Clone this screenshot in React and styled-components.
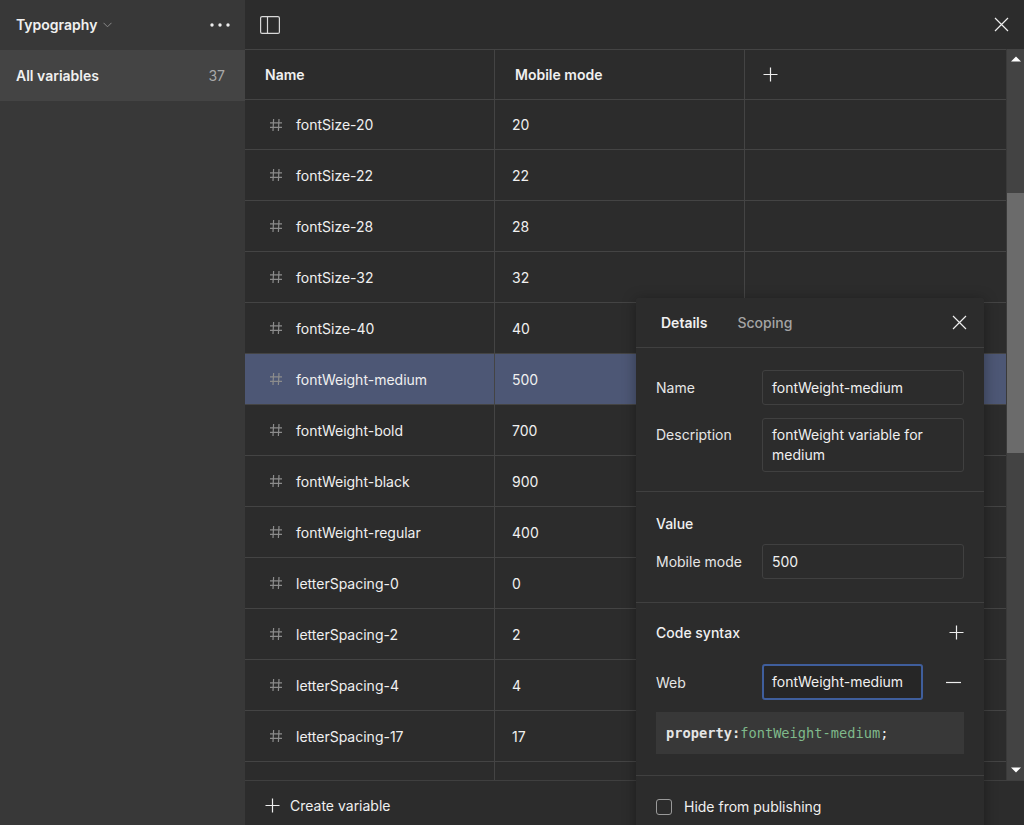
import React from "react";
import styled, { createGlobalStyle } from "styled-components";

const rows = [
  { name: "fontSize-20", value: "20" },
  { name: "fontSize-22", value: "22" },
  { name: "fontSize-28", value: "28" },
  { name: "fontSize-32", value: "32" },
  { name: "fontSize-40", value: "40" },
  { name: "fontWeight-medium", value: "500", selected: true },
  { name: "fontWeight-bold", value: "700" },
  { name: "fontWeight-black", value: "900" },
  { name: "fontWeight-regular", value: "400" },
  { name: "letterSpacing-0", value: "0" },
  { name: "letterSpacing-2", value: "2" },
  { name: "letterSpacing-4", value: "4" },
  { name: "letterSpacing-17", value: "17" },
  { name: "", value: "" },
];

const GlobalStyle = createGlobalStyle`
  html, body {
    margin: 0;
    height: 100%;
    overflow: hidden;
    background: #2c2c2c;
  }
  * {
    box-sizing: border-box;
  }
`;

const Page = styled.div`
  position: relative;
  display: flex;
  width: 1024px;
  height: 825px;
  overflow: hidden;
  background: #2c2c2c;
  color: #f0f0f0;
  font-family: Inter, "Liberation Sans", sans-serif;
  font-size: 14px;
`;

const Sidebar = styled.aside`
  flex: 0 0 245px;
  display: flex;
  flex-direction: column;
  background: #383838;
`;

const SidebarHead = styled.div`
  display: flex;
  align-items: center;
  height: 50px;
  padding: 0 15px 1px 16px;
`;

const FileTitle = styled.span`
  font-weight: 600;
  margin-right: 6px;
`;

const Dots = styled.svg`
  margin-left: auto;
  display: block;
`;

const SidebarItem = styled.div`
  display: flex;
  align-items: center;
  justify-content: space-between;
  height: 51px;
  padding: 0 20px 0 16px;
  background: #444444;
  font-weight: 600;
`;

const Count = styled.span`
  color: #a8a8a8;
  font-weight: 400;
`;

const Main = styled.main`
  flex: 1;
  display: flex;
  flex-direction: column;
  min-width: 0;
`;

const TopBar = styled.div`
  flex: 0 0 49px;
  display: flex;
  align-items: center;
  justify-content: space-between;
  padding: 0 15px;
`;

const Body = styled.div`
  flex: 0 0 731px;
  display: flex;
  min-height: 0;
`;

const Table = styled.div`
  flex: 1;
  overflow: hidden;
  border-top: 1px solid #444444;
`;

const Row = styled.div`
  display: grid;
  grid-template-columns: 250px 250px 1fr;
  height: ${(p) => p.$height || 51}px;
  background: ${(p) => (p.$selected ? "#4d5775" : "transparent")};
  border-bottom: 1px solid #444444;
`;

const Cell = styled.div`
  display: flex;
  align-items: center;
  min-width: 0;
  padding-left: ${(p) => p.$pad || 0}px;
  border-right: ${(p) => (p.$last ? "none" : "1px solid #444444")};
  font-weight: ${(p) => (p.$head ? 600 : 400)};
`;

const HashIcon = styled.svg`
  display: block;
  margin-right: 13px;
`;

const Scrollbar = styled.div`
  flex: 0 0 18px;
  display: flex;
  flex-direction: column;
  align-items: center;
  background: #434343;
  border-left: 1px solid #3a3a3a;
`;

const Arrow = styled.svg`
  display: block;
  flex: 0 0 auto;
  margin-top: ${(p) => p.$top};
  margin-bottom: ${(p) => p.$bottom || "0"};
`;

const Thumb = styled.div`
  flex: 0 0 260px;
  align-self: stretch;
  margin-top: 131px;
  background: #6b6b6b;
`;

const Footer = styled.div`
  flex: 1;
  display: flex;
  align-items: center;
  gap: 10px;
  padding: 4px 0 0 20px;
  border-top: 1px solid #3f3f3f;
`;

const Popover = styled.section`
  position: absolute;
  left: 636px;
  top: 298px;
  width: 348px;
  height: 540px;
  background: #2c2c2c;
  box-shadow: 0 2px 14px rgba(0, 0, 0, 0.35);
  border-radius: 2px;
`;

const PopHead = styled.div`
  display: flex;
  align-items: center;
  height: 50px;
  padding: 0 17px 0 25px;
  border-bottom: 1px solid #404040;
`;

const Tab = styled.span`
  font-weight: ${(p) => (p.$active ? 600 : 500)};
  color: ${(p) => (p.$active ? "#f0f0f0" : "#a4a4a4")};
  margin-right: 30px;
`;

const Section = styled.div`
  display: flex;
  flex-direction: column;
  height: ${(p) => p.$height}px;
  padding: ${(p) => p.$pad};
  gap: ${(p) => p.$gap || 0}px;
  border-bottom: ${(p) => (p.$open ? "none" : "1px solid #404040")};
`;

const SectionTitle = styled.div`
  display: flex;
  align-items: center;
  justify-content: space-between;
  height: ${(p) => p.$height || 20}px;
  font-weight: 500;
`;

const Field = styled.div`
  display: flex;
  align-items: ${(p) => (p.$top ? "flex-start" : "center")};
`;

const Label = styled.div`
  flex: 0 0 106px;
  color: #e6e6e6;
  padding-top: ${(p) => (p.$top ? 8 : 0)}px;
`;

const Input = styled.div`
  width: ${(p) => p.$width || 202}px;
  min-height: ${(p) => p.$height || 35}px;
  display: flex;
  align-items: center;
  padding: ${(p) => (p.$focus ? "0 8px" : "0 9px")};
  border: ${(p) => (p.$focus ? "2px solid #3f5e9c" : "1px solid #404040")};
  border-radius: 3px;
  background: ${(p) => (p.$focus ? "#262626" : "transparent")};
  line-height: 20px;
`;

const IconEnd = styled.svg`
  display: block;
  margin-left: auto;
  margin-right: 3px;
`;

const CodeBox = styled.div`
  display: flex;
  align-items: center;
  height: 42px;
  margin-top: 12px;
  padding-left: 10px;
  background: #383838;
  font-family: "DejaVu Sans Mono", "Liberation Mono", monospace;
  font-size: 13.7px;
  white-space: pre;
`;

const CodeKey = styled.span`
  font-weight: 700;
  color: #e4e4e4;
`;

const CodeValue = styled.span`
  color: #7fb98a;
`;

const CheckRow = styled.div`
  display: flex;
  align-items: center;
  gap: 12px;
  height: 61px;
  padding-left: 20px;
`;

const Checkbox = styled.span`
  width: 16px;
  height: 16px;
  border: 1.5px solid #9a9a9a;
  border-radius: 3px;
`;

const Plus = ({ size = 15, className }) => (
  <svg className={className} width={size} height={size} viewBox="0 0 15 15" fill="none" stroke="#eeeeee" strokeWidth="1.2">
    <path d="M7.5 0.5v14M0.5 7.5h14" />
  </svg>
);

const Cross = () => (
  <svg width="15" height="15" viewBox="0 0 15 15" fill="none" stroke="#eeeeee" strokeWidth="1.2" style={{ display: "block" }}>
    <path d="M1 1l13 13M14 1L1 14" />
  </svg>
);

const Hash = () => (
  <HashIcon width="14" height="14" viewBox="0 0 14 14" fill="none" stroke="#8c8c8c" strokeWidth="1.2">
    <path d="M4.6 1L4 13M10 1L9.4 13M1 4.8h12M1 9.4h12" />
  </HashIcon>
);

const VariableRow = ({ name, value, selected, height }) => (
  <Row $selected={selected} $height={height}>
    <Cell $pad={24}>
      {name && <Hash />}
      {name}
    </Cell>
    <Cell $pad={17}>{value}</Cell>
    <Cell $last />
  </Row>
);

export default function App() {
  return (
    <Page>
      <GlobalStyle />
      <Sidebar>
        <SidebarHead>
          <FileTitle>Typography</FileTitle>
          <svg width="9" height="6" viewBox="0 0 9 6" fill="none" stroke="#8a8a8a">
            <path d="M0.5 0.8L4.5 4.8L8.5 0.8" />
          </svg>
          <Dots width="20" height="4" viewBox="0 0 20 4" fill="#eeeeee">
            <circle cx="2" cy="2" r="1.7" />
            <circle cx="10" cy="2" r="1.7" />
            <circle cx="18" cy="2" r="1.7" />
          </Dots>
        </SidebarHead>
        <SidebarItem>
          All variables
          <Count>37</Count>
        </SidebarItem>
      </Sidebar>

      <Main>
        <TopBar>
          <svg width="20" height="18" viewBox="0 0 20 18" fill="none" stroke="#d8d8d8" strokeWidth="1.2">
            <rect x="0.6" y="0.6" width="18.8" height="16.8" rx="1.5" />
            <path d="M7.5 0.6v16.8" />
          </svg>
          <Cross />
        </TopBar>
        <Body>
          <Table>
            <Row $height={50}>
              <Cell $pad={20} $head>Name</Cell>
              <Cell $pad={20} $head>Mobile mode</Cell>
              <Cell $pad={18} $last>
                <Plus />
              </Cell>
            </Row>
            {rows.map((row, i) => (
              <VariableRow key={i} {...row} height={i === 0 ? 50 : 51} />
            ))}
          </Table>
          <Scrollbar>
            <Arrow $top="7px" width="10" height="6" viewBox="0 0 10 6" fill="#ffffff">
              <path d="M5 0.5L10 5.5H0z" />
            </Arrow>
            <Thumb />
            <Arrow $top="auto" $bottom="7px" width="10" height="6" viewBox="0 0 10 6" fill="#ffffff">
              <path d="M5 5.5L0 0.5H10z" />
            </Arrow>
          </Scrollbar>
        </Body>
        <Footer>
          <Plus />
          Create variable
        </Footer>
      </Main>

      <Popover>
        <PopHead>
          <Tab $active>Details</Tab>
          <Tab>Scoping</Tab>
          <IconEnd as="div" style={{ marginRight: 0 }}>
            <Cross />
          </IconEnd>
        </PopHead>
        <Section $height={144} $pad="22px 20px 0" $gap={13}>
          <Field>
            <Label>Name</Label>
            <Input>fontWeight-medium</Input>
          </Field>
          <Field $top>
            <Label $top>Description</Label>
            <Input $height={54}>fontWeight variable for medium</Input>
          </Field>
        </Section>
        <Section $height={111} $pad="21px 20px 0" $gap={11}>
          <SectionTitle>Value</SectionTitle>
          <Field>
            <Label>Mobile mode</Label>
            <Input>500</Input>
          </Field>
        </Section>
        <Section $height={173} $pad="19px 20px 0">
          <SectionTitle $height={20}>
            Code syntax
            <Plus />
          </SectionTitle>
          <Field style={{ marginTop: 22 }}>
            <Label>Web</Label>
            <Input $width={161} $height={36} $focus>fontWeight-medium</Input>
            <IconEnd width="15" height="3" viewBox="0 0 15 3" stroke="#eeeeee" strokeWidth="1.2">
              <path d="M0 1.5h15" />
            </IconEnd>
          </Field>
          <CodeBox>
            <CodeKey>property:</CodeKey>{" "}
            <CodeValue>fontWeight-medium</CodeValue>;
          </CodeBox>
        </Section>
        <CheckRow>
          <Checkbox />
          Hide from publishing
        </CheckRow>
      </Popover>
    </Page>
  );
}
